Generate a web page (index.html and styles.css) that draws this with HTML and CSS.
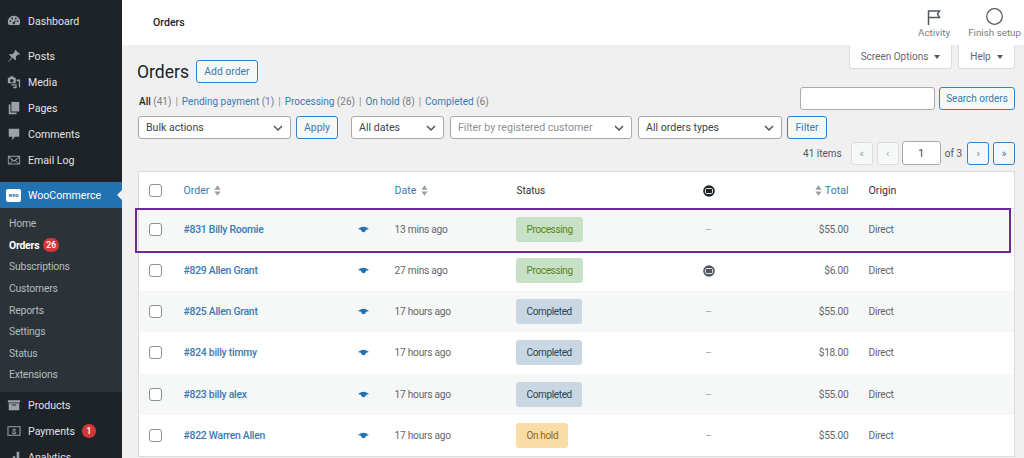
FILE: index.html
```html
<!DOCTYPE html>
<html lang="en">
<head>
  <meta charset="UTF-8" />
  <meta name="viewport" content="width=device-width, initial-scale=1.0" />
  <title>Orders</title>
  <link rel="stylesheet" href="styles.css">
</head>
<body>
  <svg class="defs" width="0" height="0">
    <symbol id="eye" viewBox="0 0 14 8"><path d="M0 3.500C2 1.500 4.400.4 7 .4s5 1.100 7 3.100c-1.400.5-2.600.8-3.700.9C9.800 6.400 8.600 7.600 7 7.600S4.200 6.400 3.700 4.400C2.600 4.300 1.400 4 0 3.500z"/></symbol>
    <symbol id="note" viewBox="0 0 12 12"><circle cx="6" cy="6" r="5.800"/><rect x="2.400" y="3.500" width="7.200" height="5" rx="1.300" fill="none" stroke="#e4e5e6" stroke-width="1"/></symbol>
    <symbol id="sort" viewBox="0 0 8 12"><path d="M4 0l3.500 5H.5zM4 12L.5 7h7z"/></symbol>
    <symbol id="chev" viewBox="0 0 10 6"><path d="M1 1l4 4 4-4" fill="none" stroke="#50575e" stroke-width="1.500"/></symbol>
  </svg>

  <div class="page">
    <!-- sidebar -->
    <nav class="sidebar">
      <a class="menu first"><svg viewBox="0 0 16 16"><path d="M8 2a7 7 0 0 0-6 10.600h12A7 7 0 0 0 8 2zM4 9a1 1 0 1 1 0-2 1 1 0 0 1 0 2zm2-3a1 1 0 1 1 0-2 1 1 0 0 1 0 2zm4 0a1 1 0 1 1 0-2 1 1 0 0 1 0 2zm-1 4.500a1.300 1.300 0 1 1-1.500-1.300L10 6.500zM12 9a1 1 0 1 1 0-2 1 1 0 0 1 0 2z"/></svg>Dashboard</a>
      <a class="menu gap"><svg viewBox="0 0 16 16"><path d="M9.500 1l5.500 5-1.300.8-1-.7-2.700 3 .3 2.800-1 1-2.700-3L1 15l-.2-.2 4.500-5.500-3-2.700 1-1 2.800.3 2.900-2.700-.6-1z"/></svg>Posts</a>
      <a class="menu"><svg viewBox="0 0 16 16"><path d="M1 3h2l1-1.500h3L8 3h2v6.500H1zm4.500 1.700a2 2 0 1 0 0 4 2 2 0 0 0 0-4zM11 5h4v9h-1.500V7H11zM5 10.500h6V15H7v-1.500h2.500V12H5z"/></svg>Media</a>
      <a class="menu"><svg viewBox="0 0 16 16"><path d="M5 1h9v11H5z"/><path d="M2 4h2v9h7v2H2z"/></svg>Pages</a>
      <a class="menu"><svg viewBox="0 0 16 16"><path d="M2 2h12v9H9l-3 4v-4H2z"/></svg>Comments</a>
      <a class="menu"><svg viewBox="0 0 16 16"><path d="M1 3h14v10H1zm1.500 1.200L8 8.500l5.500-4.300zM2 5v7l4-3.500zm12 0l-4 3.500 4 3.500zM2.800 12h10.400L9.300 9 8 10 6.700 9z" fill-rule="evenodd"/></svg>Email Log</a>

      <a class="menu woo"><span class="woo-logo">woo</span>WooCommerce</a>
      <div class="submenu">
        <a>Home</a>
        <a class="active">Orders <span class="count">26</span></a>
        <a>Subscriptions</a>
        <a>Customers</a>
        <a>Reports</a>
        <a>Settings</a>
        <a>Status</a>
        <a>Extensions</a>
      </div>
      <a class="menu"><svg viewBox="0 0 16 16"><path d="M1 2.500h14v2.500H1zM2 6h12v8H2zm3.500 1.500v1h5v-1z" fill-rule="evenodd"/></svg>Products</a>
      <a class="menu"><svg viewBox="0 0 16 16"><path d="M.5 2.500h15v11H.5zm1.200 1.200v8.600h12.600V3.700z" fill-rule="evenodd"/><text x="8" y="11" text-anchor="middle" class="dollar">$</text></svg>Payments <span class="count">1</span></a>
      <a class="menu"><svg viewBox="0 0 16 16"><path d="M2 11h3v4H2zM6.500 7h3v8h-3zM11 2h3v13h-3z"/></svg>Analytics</a>
    </nav>

    <div class="main">
      <header class="topbar">
        <span class="crumb">Orders</span>
        <div class="top-actions">
          <div class="top-action">
            <svg width="14" height="15" viewBox="0 0 14 15"><path d="M1.500 15V1h11l-2 3 2 3.500H1.500" fill="none" stroke="#50575e" stroke-width="1.500"/></svg>
            <span>Activity</span>
          </div>
          <div class="top-action">
            <svg width="17" height="17" viewBox="0 0 17 17"><circle cx="8.500" cy="8.500" r="7.800" fill="none" stroke="#50575e" stroke-width="1.200"/></svg>
            <span>Finish setup</span>
          </div>
        </div>
      </header>

      <div class="content">
        <div class="screen-tabs">
          <a class="tab tab-options">Screen Options <i></i></a>
          <a class="tab tab-help">Help <i></i></a>
        </div>

        <div class="title-row">
          <h1>Orders</h1>
          <a class="btn w-add">Add order</a>
        </div>

        <div class="status-row">
          <ul class="subsub">
            <li><b>All</b> <em>(41)</em></li>
            <li><a>Pending payment</a> <em>(1)</em></li>
            <li><a>Processing</a> <em>(26)</em></li>
            <li><a>On hold</a> <em>(8)</em></li>
            <li><a>Completed</a> <em>(6)</em></li>
          </ul>
          <div class="search">
            <span class="field search-input"></span>
            <a class="btn">Search orders</a>
          </div>
        </div>

        <div class="filters">
          <span class="field select w-bulk">Bulk actions<svg><use href="#chev"/></svg></span>
          <a class="btn w-apply">Apply</a>
          <span class="field select w-dates">All dates<svg><use href="#chev"/></svg></span>
          <span class="field select w-customer muted">Filter by registered customer<svg><use href="#chev"/></svg></span>
          <span class="field select w-types">All orders types<svg><use href="#chev"/></svg></span>
          <a class="btn w-filter">Filter</a>
        </div>

        <div class="pager">
          <span class="items">41 items</span>
          <a class="btn page-btn off">«</a>
          <a class="btn page-btn off">‹</a>
          <span class="field page-num">1</span>
          <span class="items">of 3</span>
          <a class="btn page-btn">›</a>
          <a class="btn page-btn">»</a>
        </div>

        <div class="table-wrap">
          <table class="orders">
            <colgroup>
              <col class="c-check"><col class="c-order"><col class="c-date"><col class="c-status"><col class="c-note"><col class="c-total"><col>
            </colgroup>
            <thead>
              <tr>
                <th><span class="check"></span></th>
                <th><a>Order</a> <svg class="sort"><use href="#sort"/></svg></th>
                <th><a>Date</a> <svg class="sort"><use href="#sort"/></svg></th>
                <th class="plain">Status</th>
                <th class="center"><svg class="note"><use href="#note"/></svg></th>
                <th class="right"><svg class="sort"><use href="#sort"/></svg> <a>Total</a></th>
                <th>Origin</th>
              </tr>
            </thead>
            <tbody>
              <tr>
                <td><span class="check"></span></td>
                <td><div class="order-cell"><a>#831 Billy Roomie</a><svg class="eye"><use href="#eye"/></svg></div></td>
                <td>13 mins ago</td>
                <td><mark class="badge processing">Processing</mark></td>
                <td class="center dash">–</td>
                <td class="right">$55.00</td>
                <td>Direct</td>
              </tr>
              <tr>
                <td><span class="check"></span></td>
                <td><div class="order-cell"><a>#829 Allen Grant</a><svg class="eye"><use href="#eye"/></svg></div></td>
                <td>27 mins ago</td>
                <td><mark class="badge processing">Processing</mark></td>
                <td class="center"><svg class="note soft"><use href="#note"/></svg></td>
                <td class="right">$6.00</td>
                <td>Direct</td>
              </tr>
              <tr>
                <td><span class="check"></span></td>
                <td><div class="order-cell"><a>#825 Allen Grant</a><svg class="eye"><use href="#eye"/></svg></div></td>
                <td>17 hours ago</td>
                <td><mark class="badge completed">Completed</mark></td>
                <td class="center dash">–</td>
                <td class="right">$55.00</td>
                <td>Direct</td>
              </tr>
              <tr>
                <td><span class="check"></span></td>
                <td><div class="order-cell"><a>#824 billy timmy</a><svg class="eye"><use href="#eye"/></svg></div></td>
                <td>17 hours ago</td>
                <td><mark class="badge completed">Completed</mark></td>
                <td class="center dash">–</td>
                <td class="right">$18.00</td>
                <td>Direct</td>
              </tr>
              <tr>
                <td><span class="check"></span></td>
                <td><div class="order-cell"><a>#823 billy alex</a><svg class="eye"><use href="#eye"/></svg></div></td>
                <td>17 hours ago</td>
                <td><mark class="badge completed">Completed</mark></td>
                <td class="center dash">–</td>
                <td class="right">$55.00</td>
                <td>Direct</td>
              </tr>
              <tr>
                <td><span class="check"></span></td>
                <td><div class="order-cell"><a>#822 Warren Allen</a><svg class="eye"><use href="#eye"/></svg></div></td>
                <td>17 hours ago</td>
                <td><mark class="badge on-hold">On hold</mark></td>
                <td class="center dash">–</td>
                <td class="right">$55.00</td>
                <td>Direct</td>
              </tr>
            </tbody>
          </table>
          <!-- highlight drawn over the first row -->
          <div class="row-highlight"></div>
        </div>
      </div>
    </div>
  </div>
</body>
</html>
```

FILE: styles.css
```css
* {
  margin: 0;
  padding: 0;
  box-sizing: border-box;
}

html, body {
  height: 458px;
  overflow: hidden;
}

body {
  background: #f0f0f1;
  color: #50575e;
  font-family: Roboto, "Noto Sans", sans-serif;
  font-size: 10.6px;
}

.defs {
  position: absolute;
}

.page {
  display: flex;
  height: 458px;
}

a {
  color: #3b7ab0;
  text-decoration: none;
}

/* sidebar */
.sidebar {
  width: 122px;
  flex: none;
  height: 458px;
  overflow: hidden;
  background: #1d2327;
  color: #e6e8ea;
}

.menu {
  display: flex;
  align-items: center;
  gap: 7px;
  height: 26px;
  padding-left: 7px;
  font-size: 10.6px;
  color: #e0e2e4;
}

.menu svg {
  width: 14px;
  height: 14px;
  flex: none;
  fill: #9ca2a7;
}

.menu .dollar {
  font-size: 9px;
  font-weight: 700;
  fill: #9ca2a7;
  font-family: Roboto, sans-serif;
}

.menu.first {
  margin-top: 8px;
}

.menu.gap {
  margin-top: 9px;
}

.menu.woo {
  position: relative;
  margin-top: 9px;
  background: #2271b1;
  color: #fff;
  padding-left: 6px;
}

.menu.woo::after {
  content: "";
  position: absolute;
  right: 0;
  top: 8px;
  border: 5px solid transparent;
  border-right-color: #f0f0f1;
  border-left-width: 0;
}

.woo-logo {
  width: 15px;
  height: 13px;
  border-radius: 2px;
  background: #fff;
  color: #2271b1;
  font-size: 5.5px;
  font-weight: 700;
  line-height: 13px;
  text-align: center;
  flex: none;
}

.submenu {
  display: flex;
  flex-direction: column;
  background: #2c3338;
  height: 184px;
  padding-top: 5px;
}

.submenu a {
  display: flex;
  align-items: center;
  gap: 4px;
  height: 21.6px;
  flex: none;
  padding-left: 9px;
  color: #b6babd;
  font-size: 10.4px;
  letter-spacing: -0.2px;
}

.submenu a.active {
  color: #fff;
  font-size: 10.4px;
  font-weight: 700;
}

.count {
  display: inline-block;
  min-width: 14px;
  height: 14px;
  line-height: 14px;
  padding: 0 3px;
  border-radius: 7px;
  background: #d63638;
  color: #fff;
  font-size: 8.5px;
  font-weight: 600;
  letter-spacing: 0;
  text-align: center;
}

/* top bar */
.topbar {
  display: flex;
  justify-content: space-between;
  height: 45px;
  background: #fff;
  padding: 0 3px 0 31px;
}

.crumb {
  align-self: center;
  color: #1d2327;
  font-weight: 500;
  font-size: 10.6px;
}

.top-actions {
  display: flex;
  gap: 18px;
}

.top-action {
  display: flex;
  flex-direction: column;
  align-items: center;
  justify-content: flex-end;
  gap: 2px;
  padding-bottom: 7px;
  font-size: 9.8px;
  color: #787c82;
}

/* page content */
.main {
  flex: 1;
  min-width: 0;
}

.content {
  padding: 0 9px 0 15px;
}

.screen-tabs {
  display: flex;
  justify-content: flex-end;
  gap: 6px;
  height: 15px;
}

.tab {
  display: flex;
  align-items: center;
  justify-content: center;
  gap: 6px;
  height: 24px;
  background: #fff;
  border: 1px solid #dcdcde;
  border-top: 0;
  border-radius: 0 0 3px 3px;
  color: #646970;
  font-size: 10px;
}

.tab-options { width: 103px; }
.tab-help { width: 57px; }

.tab i {
  border: 3px solid transparent;
  border-top: 4px solid #50575e;
  border-bottom: 0;
}

.title-row {
  display: flex;
  align-items: center;
  gap: 7px;
  height: 23px;
}

h1 {
  font-size: 17.5px;
  font-weight: 400;
  color: #1d2327;
}

.btn {
  display: inline-flex;
  align-items: center;
  justify-content: center;
  height: 23px;
  padding: 0 8px;
  border: 1px solid #3582c4;
  border-radius: 3px;
  background: #f6f7f7;
  color: #3b7ab0;
  font-size: 10.4px;
}

.w-add { width: 62px; padding: 0; }
.w-apply { width: 42px; padding: 0; }
.w-filter { width: 40px; padding: 0; }

.status-row {
  display: flex;
  justify-content: space-between;
  align-items: flex-end;
  height: 25px;
  margin-top: 2px;
}

.subsub {
  display: flex;
  list-style: none;
  font-size: 10px;
  padding: 0 0 0 2px;
  line-height: 16px;
}

.subsub li + li::before {
  content: "|";
  color: #8c8f94;
  margin: 0 4px;
}

.subsub b {
  color: #1d2327;
  font-weight: 500;
}

.subsub em {
  font-style: normal;
  color: #787c82;
}

.search {
  display: flex;
  gap: 4px;
}

.field {
  display: inline-flex;
  align-items: center;
  height: 23px;
  background: #fff;
  border: 1px solid #a7aaad;
  border-radius: 3px;
  color: #3c434a;
  font-size: 10.6px;
}

.search-input {
  width: 135px;
}

.search .btn {
  width: 76px;
  padding: 0;
  font-size: 10px;
}

.filters {
  display: flex;
  align-items: center;
  gap: 5px;
  margin-top: 6px;
  padding-left: 1px;
}

.select {
  justify-content: space-between;
  padding: 0 7px;
}

.select svg {
  width: 10px;
  height: 6px;
}

.w-bulk { width: 153px; }
.w-dates { width: 93px; margin-left: 8px; }
.w-customer { width: 182px; margin-left: 1px; }
.w-types { width: 144px; margin-left: 1px; }
.muted { color: #8c8f94; }

.pager {
  display: flex;
  justify-content: flex-end;
  align-items: center;
  gap: 4px;
  margin-top: 2px;
  height: 24px;
}

.page-btn {
  width: 22px;
  padding: 0;
}

.page-btn.off {
  border-color: #dcdcde;
  color: #a7aaad;
  background: #f6f7f7;
}

.items {
  color: #50575e;
  font-size: 10px;
  margin-right: 5px;
}

.field + .items { margin: 0 1px 0 0; }

.page-num {
  width: 39px;
  height: 24px;
  margin-left: -1px;
  justify-content: center;
}

/* orders table */
.table-wrap {
  position: relative;
  margin: 6px 0 0 1px;
}

.orders {
  width: 877px;
  table-layout: fixed;
  border-collapse: collapse;
  border: 1px solid #dcdcde;
  background: #fff;
}

.c-check { width: 35px; }
.c-order { width: 211px; }
.c-date { width: 122px; }
.c-status { width: 174px; }
.c-note { width: 56px; }
.c-total { width: 122px; }

.orders th {
  height: 37px;
  padding: 0 10px;
  font-weight: 400;
  text-align: left;
  color: #2c3338;
  border-bottom: 1px solid #dcdcde;
}

.orders th.plain {
  font-size: 10px;
}

.orders td {
  height: 41.25px;
  padding: 0 10px;
  color: #63666a;
  font-size: 10.2px;
  letter-spacing: -0.25px;
}

.orders th:first-child,
.orders td:first-child {
  text-align: center;
  padding: 0 2px 0 0;
}

.orders tbody tr:nth-child(odd) {
  background: #f6f7f7;
}

.orders .center { text-align: center; }
.orders .right { text-align: right; }
.orders .dash { color: #a7aaad; }

.orders td a {
  font-size: 10.4px;
  font-weight: 500;
}

.order-cell {
  display: flex;
  justify-content: space-between;
  align-items: center;
  padding-right: 6px;
}

.check {
  display: inline-block;
  width: 13px;
  height: 13px;
  vertical-align: middle;
  background: #fff;
  border: 1px solid #8c8f94;
  border-radius: 3px;
}

.sort {
  width: 7px;
  height: 11px;
  vertical-align: -2px;
  fill: #9b9ea2;
  margin-left: 2px;
}

.eye {
  width: 11px;
  height: 7px;
  fill: #2271b1;
}

.note {
  width: 12px;
  height: 12px;
  vertical-align: middle;
  fill: #1d2327;
}

.note.soft {
  fill: #50575e;
}

.badge {
  display: inline-flex;
  align-items: center;
  height: 25px;
  margin-left: -1px;
  padding: 0 10px 0 11px;
  border-radius: 3px;
  font-size: 10px;
  letter-spacing: -0.35px;
}

.processing { background: #c6e1c6; color: #5b841b; }
.completed { background: #c8d7e1; color: #2e4453; }
.on-hold { background: #f8dda7; color: #94660c; }

.row-highlight {
  position: absolute;
  left: -3px;
  top: 37px;
  width: 876px;
  height: 45px;
  border: 2px solid #6c2a96;
  pointer-events: none;
}
```
